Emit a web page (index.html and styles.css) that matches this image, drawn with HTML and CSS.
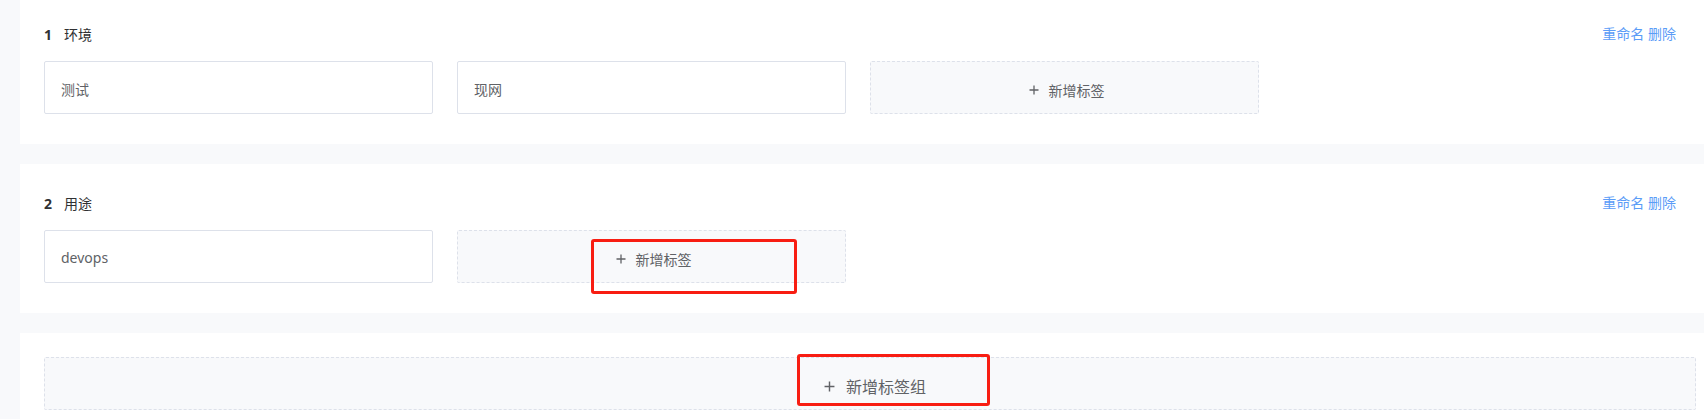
FILE: index.html
```html
<!DOCTYPE html>
<html lang="zh-CN">
<head>
<meta charset="utf-8">
<title>标签管理</title>
<link rel="stylesheet" href="styles.css">
</head>
<body>
<div class="page">
  <section class="card">
    <div class="group-head">
      <div class="group-title"><span class="group-no">1</span><span class="group-name">环境</span></div>
      <div class="group-actions"><a class="link">重命名</a> <a class="link">删除</a></div>
    </div>
    <div class="tags">
      <div class="tag">测试</div>
      <div class="tag">现网</div>
      <div class="tag-add"><svg class="plus" viewBox="0 0 10 10"><path d="M5 0.5V9.5M0.5 5H9.5"/></svg><span>新增标签</span></div>
    </div>
  </section>
  <section class="card">
    <div class="group-head">
      <div class="group-title"><span class="group-no">2</span><span class="group-name">用途</span></div>
      <div class="group-actions"><a class="link">重命名</a> <a class="link">删除</a></div>
    </div>
    <div class="tags">
      <div class="tag">devops</div>
      <div class="tag-add"><svg class="plus" viewBox="0 0 10 10"><path d="M5 0.5V9.5M0.5 5H9.5"/></svg><span>新增标签</span></div>
    </div>
  </section>
  <section class="card card-last">
    <div class="group-add"><svg class="plus plus-lg" viewBox="0 0 10 10"><path d="M5 0.5V9.5M0.5 5H9.5"/></svg><span>新增标签组</span></div>
  </section>
  <div class="mark mark-1"></div>
  <div class="mark mark-2"></div>
</div>
</body>
</html>
```

FILE: styles.css
```css
html, body {
  margin: 0;
  padding: 0;
}
body {
  background: #f8f9fb;
  font-family: "Noto Sans", "Noto Sans CJK SC", sans-serif;
  color: #606266;
  overflow: hidden;
}
.page {
  position: relative;
  padding-left: 20px;
  margin-top: -5px;
}
.card {
  background: #fff;
  padding: 30px 8px 30px 24px;
  margin-bottom: 20px;
}
.card-last {
  padding-top: 24px;
  padding-bottom: 24px;
  margin-bottom: 0;
}
.group-head {
  display: flex;
  justify-content: space-between;
  align-items: center;
  height: 20px;
  padding-right: 20px;
  margin-bottom: 16px;
}
.group-title {
  display: flex;
  align-items: center;
  font-size: 14px;
  line-height: 20px;
  color: #303133;
}
.group-no {
  font-weight: 700;
  width: 20px;
}
.group-actions {
  font-size: 14px;
  line-height: 20px;
  margin-top: -2px;
}
.link {
  color: #5b9cf7;
  cursor: pointer;
}
.tags {
  display: grid;
  grid-template-columns: repeat(3, 389px);
  column-gap: 24px;
}
.tag {
  box-sizing: border-box;
  height: 53px;
  border: 1px solid #dde1ea;
  border-radius: 2px;
  padding: 2px 16px 0;
  display: flex;
  align-items: center;
  font-size: 14px;
  color: #606266;
}
.tag-add,
.group-add {
  box-sizing: border-box;
  height: 53px;
  border: 1px dashed #dde1ea;
  border-radius: 2px;
  background: #f8f9fb;
  display: flex;
  justify-content: center;
  align-items: center;
  font-size: 14px;
  color: #606266;
  padding: 4px 0 0 4px;
}
.group-add {
  font-size: 16px;
  padding: 5px 0 0 10px;
}
.plus {
  width: 10px;
  height: 10px;
  margin-right: 10px;
  fill: none;
  stroke: #606266;
  stroke-width: 1.3;
}
.plus-lg {
  width: 11px;
  height: 11px;
  margin-right: 11px;
}
.mark {
  position: absolute;
  box-sizing: border-box;
  border: 3px solid #f81d12;
  border-radius: 3px;
}
.mark-1 {
  left: 591px;
  top: 244px;
  width: 206px;
  height: 55px;
}
.mark-2 {
  left: 797px;
  top: 359px;
  width: 193px;
  height: 52px;
}
```
